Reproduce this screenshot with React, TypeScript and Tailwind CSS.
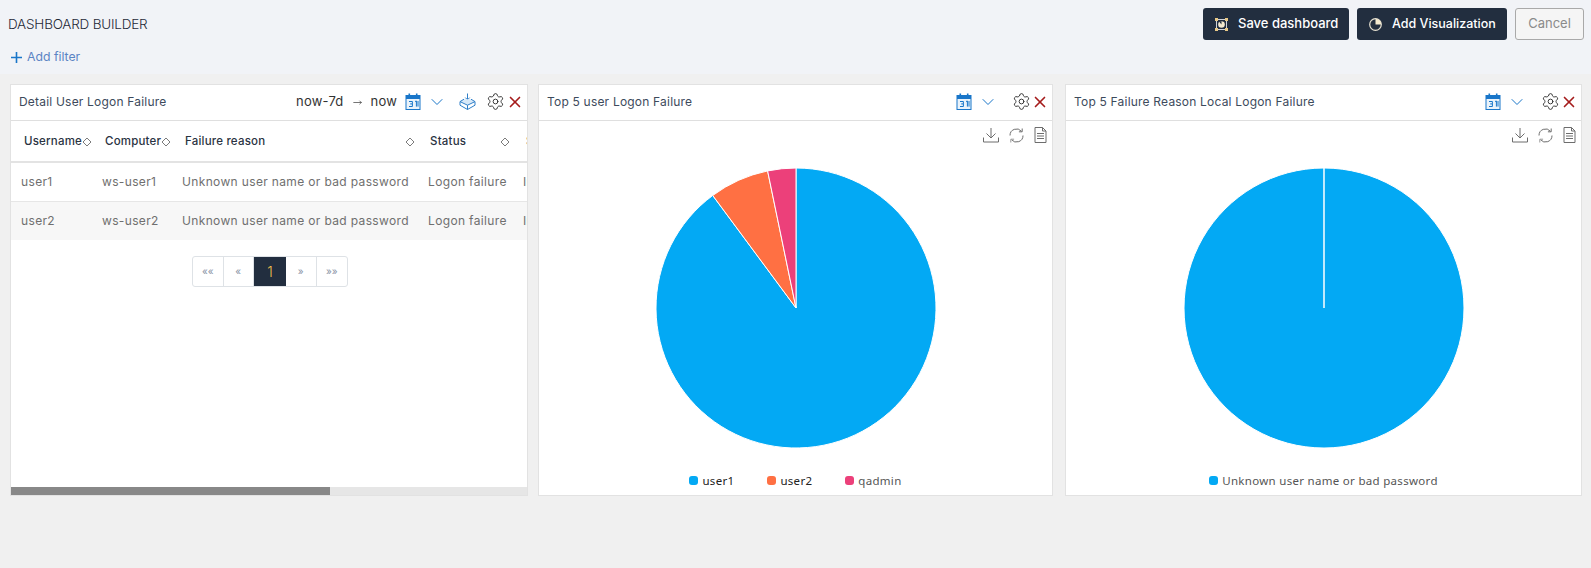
import React from 'react';
import { ChevronDown, Settings, X, MoveRight } from 'lucide-react';

const polar = (cx: number, cy: number, r: number, deg: number) => {
  const a = ((deg - 90) * Math.PI) / 180;
  return [cx + r * Math.cos(a), cy + r * Math.sin(a)];
};

const slicePath = (start: number, end: number) => {
  const [x1, y1] = polar(140, 140, 140, start);
  const [x2, y2] = polar(140, 140, 140, end);
  const large = end - start > 180 ? 1 : 0;
  return `M140 140 L${x1} ${y1} A140 140 0 ${large} 1 ${x2} ${y2} Z`;
};

const Pie: React.FC<{ slices: { color: string; from: number; to: number }[] }> = ({ slices }) => (
  <svg width="280" height="280" viewBox="0 0 280 280" className="block">
    {slices.map(s => (
      <path key={s.color} d={slicePath(s.from, s.to)} fill={s.color} stroke="#fff" strokeWidth="1" />
    ))}
  </svg>
);

const CalendarIcon = () => (
  <svg width="16" height="18" viewBox="0 0 16 18" className="shrink-0">
    <rect x="1" y="2.5" width="14" height="14" fill="#eaf3fb" stroke="#1976c9" strokeWidth="1" />
    <rect x="1" y="2.5" width="14" height="3.5" fill="#1976c9" />
    <rect x="3.5" y="0.5" width="1.6" height="3.5" fill="#1976c9" />
    <rect x="10.9" y="0.5" width="1.6" height="3.5" fill="#1976c9" />
    <path d="M4 8.5h3.4v2.4h-2.2M7.4 10.9v2.6H4M10 8.5l1.4-.5v5.6M13 8v5.6" fill="none" stroke="#1976c9" strokeWidth="1" />
  </svg>
);

const BoxIcon = () => (
  <svg width="17" height="18" viewBox="0 0 17 18" fill="none" stroke="#2f7fc9" strokeWidth="1" className="ml-[12px] shrink-0">
    <path d="M8.5 0.5v6M6.3 4.6l2.2 2.2 2.2-2.2" />
    <path d="M5 6.2L1 8.6l7.5 3.6L16 8.6l-4-2.4" fill="#d8e9f8" />
    <path d="M1 8.6v3.6l7.5 4.3 7.5-4.3V8.6M8.5 12.2v4.3" />
  </svg>
);

const Diamond = () => (
  <svg width="10" height="10" viewBox="0 0 10 10" className="shrink-0">
    <path d="M5 1L9 5 5 9 1 5z" fill="#fff" stroke="#7b7b7b" strokeWidth="1" />
  </svg>
);

const DownloadIcon = () => (
  <svg width="16" height="16" viewBox="0 0 16 16" fill="none" stroke="#6d6d6d" strokeWidth="1" className="shrink-0">
    <path d="M8 1v10M3.5 6.5L8 11l4.500-4.500M.5 10.500v4.500h15v-4.500" />
  </svg>
);

const RefreshIcon = () => (
  <svg width="17" height="17" viewBox="0 0 17 17" fill="none" strokeWidth="1" className="shrink-0">
    <path d="M2 8.500a6.500 6.500 0 0 1 11.500-4.200M15 8.500a6.500 6.500 0 0 1-11.500 4.200" stroke="#6d6d6d" />
    <path d="M14.200 1.500v3.300h-3.300" stroke="#6d6d6d" />
    <path d="M2.800 15.500v-3.300h3.300" stroke="#9a9a9a" />
  </svg>
);

const FileIcon = () => (
  <svg width="13" height="16" viewBox="0 0 13 16" fill="none" stroke="#6d6d6d" strokeWidth="1" className="shrink-0">
    <path d="M1 .5h7.500L12 4v11.500H1zM8.500.5V4H12M3 6.500h7M3 9h7M3 11.500h7" />
  </svg>
);

const PanelHeader: React.FC<{ title: string; children?: React.ReactNode; extra?: React.ReactNode }> = ({ title, children, extra }) => (
  <div className="flex h-[36px] shrink-0 items-center border-b border-[#dfdfdf] bg-white pb-[2px] pl-2 pr-[3px] text-[12px] text-[#3d4a5c]">
    <span className="flex-1 tracking-[0.2px]">{title}</span>
    {children}
    <CalendarIcon />
    <ChevronDown size={20} strokeWidth={1.2} className="ml-[6px] text-[#1976c9]" />
    {extra}
    <Settings size={19} strokeWidth={1.2} className={extra ? 'ml-[10px] mr-[1px] text-[#333]' : 'ml-[14px] text-[#333]'} />
    <X size={18} strokeWidth={2.2} className="text-[#a51c1c]" />
  </div>
);

const ChartTools = () => (
  <div className="flex h-[28px] items-center justify-end gap-[9px] pr-[5px]">
    <DownloadIcon />
    <RefreshIcon />
    <FileIcon />
  </div>
);

const rows = [
  { user: 'user1', host: 'ws-user1', style: 'h-[39px] border-b border-[#e6e6e6] bg-white' },
  { user: 'user2', host: 'ws-user2', style: 'h-[38px] bg-[#f7f7f7]' },
];

const pages = ['««', '«', '1', '»', '»»'];

const TablePanel = () => (
  <div className="flex h-[412px] w-[518px] shrink-0 flex-col overflow-hidden border border-[#e2e2e2] bg-white">
    <PanelHeader
      title="Detail User Logon Failure"
      extra={<BoxIcon />}
    >
      <span className="text-[13px] tracking-[0.2px] text-[#333]">now-7d</span>
      <MoveRight size={9} strokeWidth={1.8} className="mx-[9px] mt-[2px] text-[#333]" />
      <span className="mr-[8px] text-[13px] tracking-[0.2px] text-[#333]">now</span>
    </PanelHeader>
    <div className="flex-1 overflow-hidden">
      <div className="flex h-[42px] w-[560px] items-center whitespace-nowrap border-b-2 border-[#e3e3e3] pt-[1px] text-[11.5px] font-medium tracking-[0.2px] text-[#2a3342]">
        <div className="flex w-[81px] items-center pl-[13px]"><span>Username</span><Diamond /></div>
        <div className="flex w-[80px] items-center pl-[13px]"><span>Computer</span><Diamond /></div>
        <div className="flex w-[243px] items-center justify-between pl-[13px]"><span>Failure reason</span><Diamond /></div>
        <div className="flex w-[100px] items-center justify-between pl-[15px] pr-[5px]"><span>Status</span><Diamond /></div>
        <div className="pl-[11px]">S</div>
      </div>
      {rows.map(r => (
        <div key={r.user} className={`flex w-[560px] items-center whitespace-nowrap text-[12px] tracking-[0.35px] text-[#6f6f6f] ${r.style}`}>
          <div className="w-[81px] pl-[10px]">{r.user}</div>
          <div className="w-[80px] pl-[10px]">{r.host}</div>
          <div className="w-[243px] pl-[10px]">Unknown user name or bad password</div>
          <div className="w-[100px] pl-[13px]">Logon failure</div>
          <div className="pl-[8px]">In</div>
        </div>
      ))}
      <div className="mt-[16px] flex justify-center pl-[2px]">
        <div className="flex h-[31px] overflow-hidden rounded-[3px] border border-[#dee2e6]">
          {pages.map(p =>
            p === '1' ? (
              <div key={p} className="flex w-[32px] items-center justify-center bg-[#222e3f] text-[14px] font-light text-[#f2c14e]">{p}</div>
            ) : (
              <div key={p} className="flex w-[30.5px] items-center justify-center border-r border-[#dee2e6] text-[10px] text-[#8a94a6] last:border-r-0">{p}</div>
            ),
          )}
        </div>
      </div>
    </div>
    <div className="h-[8px] shrink-0 bg-[#e6e6e6]">
      <div className="h-full w-[319px] bg-[#888888]" />
    </div>
  </div>
);

const LegendItem: React.FC<{ color: string; label: string; muted?: boolean }> = ({ color, label, muted }) => (
  <div className="flex items-center gap-[4px]">
    <span className="h-[9px] w-[9px] rounded-[3px]" style={{ backgroundColor: color }} />
    <span className={muted ? 'text-[#555]' : 'text-[#222]'}>{label}</span>
  </div>
);

const ChartPanel: React.FC<{
  title: string;
  width: string;
  slices: { color: string; from: number; to: number }[];
  children: React.ReactNode;
}> = ({ title, width, slices, children }) => (
  <div className={`flex h-[412px] shrink-0 flex-col border border-[#e2e2e2] bg-white ${width}`}>
    <PanelHeader title={title} />
    <ChartTools />
    <div className="mt-[19px] flex justify-center"><Pie slices={slices} /></div>
    <div className="mt-[24px] flex justify-center gap-[33px] font-['Noto_Sans',sans-serif] text-[11.5px] tracking-[0.3px]">{children}</div>
  </div>
);

export default function App() {
  return (
    <div className="min-h-[568px] bg-[#f0f0f0] font-['Inter',sans-serif]">
      <div className="h-[74px] bg-[#f1f3f7] pl-2 pr-[7px]">
        <div className="flex h-[48px] items-start justify-between pt-2">
          <h1 className="mt-[6px] text-[13.5px] font-light tracking-[-0.2px] text-[#1f2937]">DASHBOARD BUILDER</h1>
          <div className="flex gap-2 text-[13px]">
            <button className="flex h-[32px] w-[146px] items-center gap-[10px] rounded-[3px] bg-[#222e3f] pl-[12px] font-medium text-white">
              <svg width="13" height="13" viewBox="0 0 13 13" className="shrink-0">
                <rect x="1.500" y="1.500" width="10" height="10" fill="none" stroke="#cfd3d8" />
                <path d="M0 0h3v3H0zM10 0h3v3h-3zM0 10h3v3H0zM10 10h3v3h-3z" fill="#e8c987" />
                <circle cx="6.500" cy="6.500" r="3.300" fill="#f3e9cf" />
                <path d="M6.500 6.500V3.200H3.700z" fill="#222e3f" />
              </svg>
              Save dashboard
            </button>
            <button className="flex h-[32px] w-[150px] items-center gap-[10px] rounded-[3px] bg-[#222e3f] pl-[12px] text-[12.5px] font-medium text-white">
              <svg width="13" height="13" viewBox="0 0 13 13" className="shrink-0">
                <circle cx="6.500" cy="6.500" r="5.800" fill="none" stroke="#e8e2d2" strokeWidth="1.200" />
                <path d="M6.500.7a5.800 5.800 0 0 1 5.800 5.800H6.500z" fill="#f3e9cf" />
              </svg>
              Add Visualization
            </button>
            <button className="h-[32px] w-[69px] rounded-[3px] border border-[#a9a9a9] bg-[#f5f5f5] text-[#8a8a8a]">Cancel</button>
          </div>
        </div>
        <div className="flex items-center gap-[5px] pl-[3px] text-[12.25px] text-[#5b84c4]">
          <svg width="11" height="11" viewBox="0 0 11 11" className="shrink-0">
            <path d="M5.500 0v11M0 5.500h11" stroke="#1976c9" strokeWidth="1.600" />
          </svg>
          Add filter
        </div>
      </div>
      <div className="flex gap-[10px] pl-[10px] pt-[10px]">
        <TablePanel />
        <ChartPanel
          title="Top 5 user Logon Failure"
          width="w-[515px]"
          slices={[
            { color: '#03a9f4', from: 0, to: 323.5 },
            { color: '#ff7043', from: 323.5, to: 348.3 },
            { color: '#ec407a', from: 348.3, to: 360 },
          ]}
        >
          <LegendItem color="#03a9f4" label="user1" />
          <LegendItem color="#ff7043" label="user2" />
          <LegendItem color="#ec407a" label="qadmin" muted />
        </ChartPanel>
        <ChartPanel
          title="Top 5 Failure Reason Local Logon Failure"
          width="ml-[2px] w-[517px]"
          slices={[{ color: '#03a9f4', from: 0, to: 359.99 }]}
        >
          <LegendItem color="#03a9f4" label="Unknown user name or bad password" muted />
        </ChartPanel>
      </div>
    </div>
  );
}
